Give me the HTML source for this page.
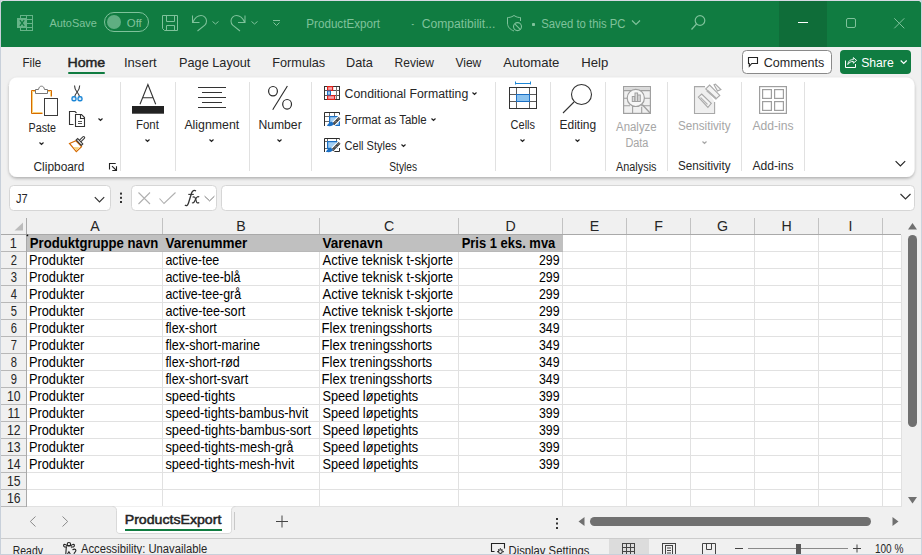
<!DOCTYPE html>
<html><head><meta charset="utf-8"><style>
html,body{margin:0;padding:0;width:922px;height:555px;overflow:hidden;background:#f0f0f0;}
svg{display:block;font-family:"Liberation Sans", sans-serif;}
</style></head><body>
<svg width="922" height="555" viewBox="0 0 922 555">
<defs><filter id="sh" x="-5%" y="-10%" width="110%" height="130%"><feDropShadow dx="0" dy="1.5" stdDeviation="1.6" flood-color="#000" flood-opacity="0.28"/></filter></defs>
<rect x="0" y="0" width="922" height="555" fill="#f0f0f0" />
<rect x="1" y="1" width="920" height="20" fill="#107c41" rx="2.5"/>
<rect x="1" y="10" width="920" height="37" fill="#107c41" />
<rect x="779" y="1" width="48" height="46" fill="#0f6d39" />
<g fill="none" stroke="#66b488" stroke-width="1">
<rect x="20.5" y="15.5" width="12" height="15"/>
<line x1="26.5" y1="15" x2="26.5" y2="31"/>
<line x1="20" y1="19.5" x2="33" y2="19.5"/>
<line x1="20" y1="23.5" x2="33" y2="23.5"/>
<line x1="20" y1="27.5" x2="33" y2="27.5"/>
</g>
<rect x="17" y="18" width="10" height="10" fill="#66b488" />
<path d="M19.9 20.2 L24.2 25.8 M24.2 20.2 L19.9 25.8" stroke="#107c41" fill="none" stroke-width="1.3" />
<text x="49.40" y="27" font-size="11.5" fill="#7fc29b" font-weight="normal" textLength="47.48" lengthAdjust="spacingAndGlyphs" >AutoSave</text>
<rect x="104.5" y="12.5" width="44" height="19" rx="9.5" fill="none" stroke="#7fc29b"/>
<circle cx="114" cy="22" r="7" fill="#5fae82"/>
<text x="126.80" y="27" font-size="11.5" fill="#7fc29b" font-weight="normal" textLength="15.00" lengthAdjust="spacingAndGlyphs" >Off</text>
<path d="M162.5 15.5 H177.5 V30.5 H164.5 L162.5 28.5 Z" stroke="#7fc29b" fill="none" stroke-width="1" />
<path d="M166.5 15.5 V21.5 H174.5 V15.5" stroke="#7fc29b" fill="none" stroke-width="1" />
<path d="M166.5 30.5 V25.5 H174.5 V30.5" stroke="#7fc29b" fill="none" stroke-width="1" />
<path d="M192.5 15.5 V22.5 H199.5 M193 22 C195 17.5 198 15.5 201 15.5 C204 15.5 206.5 18 206.5 21 C206.5 23 205.8 24.2 204.8 25.2 L197.5 31" stroke="#7fc29b" fill="none" stroke-width="1.05" />
<path d="M212.5 21.5 L215.5 24 L218.5 21.5" stroke="#7fc29b" fill="none" stroke-width="1" />
<path d="M 245.00 15.5 V 22.5 H 238.00 M 244.50 22.0 C 242.50 17.5 239.50 15.5 236.50 15.5 C 233.50 15.5 231.00 18.0 231.00 21.0 C 231.00 23.0 231.70 24.2 232.70 25.2 L 240.00 31.0" stroke="#7fc29b" fill="none" stroke-width="1.05" />
<path d="M251.5 21.5 L254.5 24 L257.5 21.5" stroke="#7fc29b" fill="none" stroke-width="1" />
<line x1="273" y1="20.5" x2="280" y2="20.5" stroke="#7fc29b" stroke-width="1" />
<path d="M273.5 22.5 L276.5 25.5 L279.5 22.5" stroke="#7fc29b" fill="none" stroke-width="1" />
<text x="306.30" y="27.8" font-size="12" fill="#7fc29b" font-weight="normal" textLength="73.75" lengthAdjust="spacingAndGlyphs" >ProductExport</text>
<text x="411.50" y="27.8" font-size="12" fill="#7fc29b" font-weight="normal" textLength="2.50" lengthAdjust="spacingAndGlyphs" >-</text>
<text x="421.70" y="27.8" font-size="12" fill="#7fc29b" font-weight="normal" textLength="73.64" lengthAdjust="spacingAndGlyphs" >Compatibilit...</text>
<path d="M514 15.5 C511 17.5 509 17.5 507.5 17.5 V23 C507.5 27 510 29.5 514 31 " stroke="#7fc29b" fill="none" stroke-width="1" />
<path d="M514 15.5 C517 17.5 519 17.5 520.5 17.5 V21" stroke="#7fc29b" fill="none" stroke-width="1" />
<circle cx="517.5" cy="26.6" r="4" fill="none" stroke="#7fc29b" stroke-width="1.1"/>
<line x1="514.8" y1="23.9" x2="520.2" y2="29.3" stroke="#7fc29b" stroke-width="1.1" />
<rect x="532" y="23" width="3" height="3" rx="0.8" fill="#7fc29b"/>
<text x="541.20" y="27.8" font-size="12" fill="#7fc29b" font-weight="normal" textLength="84.29" lengthAdjust="spacingAndGlyphs" >Saved to this PC</text>
<path d="M632.0 20.5 L636 24.5 L640.0 20.5" stroke="#7fc29b" fill="none" stroke-width="1.2" />
<circle cx="700" cy="20.5" r="4.8" fill="none" stroke="#7fc29b" stroke-width="1.2"/>
<line x1="696.5" y1="24" x2="691.5" y2="29.5" stroke="#7fc29b" stroke-width="1.2" />
<rect x="798" y="22" width="10" height="1" fill="#ffffff" />
<rect x="846.5" y="18.5" width="9" height="9" rx="1.5" fill="none" stroke="#7fc29b"/>
<path d="M894.3 18.3 L904.3 28.3 M904.3 18.3 L894.3 28.3" stroke="#7fc29b" fill="none" stroke-width="1" />
<text x="22.51" y="67" font-size="13" fill="#262626" font-weight="normal" textLength="18.70" lengthAdjust="spacingAndGlyphs" >File</text>
<text x="67.41" y="67" font-size="13" fill="#242424" font-weight="normal" textLength="37.84" lengthAdjust="spacingAndGlyphs" stroke="#242424" stroke-width="0.45">Home</text>
<text x="124.00" y="67" font-size="13" fill="#262626" font-weight="normal" textLength="32.61" lengthAdjust="spacingAndGlyphs" >Insert</text>
<text x="179.02" y="67" font-size="13" fill="#262626" font-weight="normal" textLength="71.40" lengthAdjust="spacingAndGlyphs" >Page Layout</text>
<text x="272.32" y="67" font-size="13" fill="#262626" font-weight="normal" textLength="52.89" lengthAdjust="spacingAndGlyphs" >Formulas</text>
<text x="346.02" y="67" font-size="13" fill="#262626" font-weight="normal" textLength="26.82" lengthAdjust="spacingAndGlyphs" >Data</text>
<text x="394.58" y="67" font-size="13" fill="#262626" font-weight="normal" textLength="39.36" lengthAdjust="spacingAndGlyphs" >Review</text>
<text x="455.40" y="67" font-size="13" fill="#262626" font-weight="normal" textLength="25.93" lengthAdjust="spacingAndGlyphs" >View</text>
<text x="503.30" y="67" font-size="13" fill="#262626" font-weight="normal" textLength="56.13" lengthAdjust="spacingAndGlyphs" >Automate</text>
<text x="581.19" y="67" font-size="13" fill="#262626" font-weight="normal" textLength="27.04" lengthAdjust="spacingAndGlyphs" >Help</text>
<rect x="68" y="72" width="37" height="2" fill="#107c41" rx="1"/>
<rect x="742.5" y="50.5" width="89" height="23" rx="4" fill="#fff" stroke="#8a8a8a"/>
<path d="M748.5 57.5 H757.5 V63.5 H751.8 L749.3 66.3 V63.5 H748.5 Z" stroke="#222" fill="none" stroke-width="1.1" />
<text x="763.70" y="67" font-size="13" fill="#262626" font-weight="normal" textLength="60.62" lengthAdjust="spacingAndGlyphs" >Comments</text>
<rect x="840" y="50" width="71" height="24" rx="4" fill="#107c41"/>
<path d="M845.5 60.5 V67.5 H855.5 V64" stroke="#fff" fill="none" stroke-width="1" />
<path d="M847.8 64.5 C848.3 60.8 850.3 59.6 853.3 59.6 V57.6 L856.6 60.4 L853.3 63.2 V61.4 C850.8 61.4 849.3 62.4 847.8 64.5 Z" stroke="#fff" fill="none" stroke-width="0.95" />
<text x="861.20" y="67" font-size="13" fill="#fff" font-weight="normal" textLength="32.52" lengthAdjust="spacingAndGlyphs" >Share</text>
<path d="M900.7 60.5 L903.7 63.5 L906.7 60.5" stroke="#fff" fill="none" stroke-width="1.2" />
<rect x="9" y="77.5" width="905.5" height="99.5" rx="8" fill="#fff" filter="url(#sh)"/>
<rect x="120" y="82" width="1" height="89" fill="#e1e1e1" />
<rect x="175" y="82" width="1" height="89" fill="#e1e1e1" />
<rect x="249" y="82" width="1" height="89" fill="#e1e1e1" />
<rect x="311" y="82" width="1" height="89" fill="#e1e1e1" />
<rect x="495" y="82" width="1" height="89" fill="#e1e1e1" />
<rect x="550" y="82" width="1" height="89" fill="#e1e1e1" />
<rect x="605" y="82" width="1" height="89" fill="#e1e1e1" />
<rect x="667" y="82" width="1" height="89" fill="#e1e1e1" />
<rect x="741" y="82" width="1" height="89" fill="#e1e1e1" />
<rect x="804" y="82" width="1" height="89" fill="#e1e1e1" />
<path d="M42.5 113.5 H31.5 V90.5 H35.5" stroke="#d66b00" fill="none" stroke-width="1" />
<path d="M47.5 90.5 H51.5 V96.5" stroke="#d66b00" fill="none" stroke-width="1" />
<path d="M42.5 112.5 H32.5 V91.5 H35.5 M47.5 91.5 H50.5 V96.5" stroke="#f9d27a" fill="none" stroke-width="1" />
<path d="M35.5 93.5 V89.5 H38.5 C39 87 40 86.2 41.5 86.2 C43 86.2 44 87 44.5 89.5 H47.5 V93.5 Z" stroke="#777" fill="#fff" stroke-width="1" />
<rect x="44.5" y="98.5" width="13" height="17" fill="#fff" stroke="#3b3b3b"/>
<text x="28.60" y="131.8" font-size="12" fill="#262626" font-weight="normal" textLength="27.31" lengthAdjust="spacingAndGlyphs" >Paste</text>
<path d="M39.5 142.5 L41.5 144.5 L43.5 142.5" stroke="#222" fill="none" stroke-width="1.15" />
<path d="M74.5 85.5 C74.5 88 75.5 90 77 92 C78.5 94 79.5 95 79.5 97 M79.7 85.5 C79.7 88 78.7 90 77.2 92 C75.7 94 74.7 95 74.7 97" stroke="#3a3a3a" fill="none" stroke-width="1.1" />
<rect x="72" y="96.8" width="4" height="4" rx="1.6" fill="#dcecf9" stroke="#1b86d6" stroke-width="1.4"/>
<rect x="78" y="96.8" width="4" height="4" rx="1.6" fill="#dcecf9" stroke="#1b86d6" stroke-width="1.4"/>
<path d="M73.5 124.5 H69.5 V111.5 H75 L76.5 113" stroke="#333" fill="none" stroke-width="1.1" />
<path d="M75.5 114.5 H81.5 L84.5 117.5 V126.5 H75.5 Z" stroke="#333" fill="#fff" stroke-width="1.1" />
<path d="M80.5 114.5 V118.5 H84.5" stroke="#333" fill="none" stroke-width="1.1" />
<path d="M78 121.5 H82 M78 123.5 H82" stroke="#555" fill="none" stroke-width="1" />
<path d="M98.5 118.5 L100.5 120.5 L102.5 118.5" stroke="#222" fill="none" stroke-width="1.15" />
<path d="M69.5 143.5 L76 140.8 L81.5 146.7 L76.3 151.7 Z" stroke="#d66b00" fill="#fff" stroke-width="1.2" />
<path d="M73.5 147 L79.5 147.2 L76.5 150.5 Z" stroke="none" fill="#f8d47a" stroke-width="1" />
<line x1="79.8" y1="141.3" x2="83.6" y2="137.6" stroke="#3a3a3a" stroke-width="3.2" stroke-linecap="round"/>
<line x1="79.8" y1="141.3" x2="83.6" y2="137.6" stroke="#fff" stroke-width="1.1" stroke-linecap="round"/>
<path d="M76.2 140 L77.7 138.6 L82.8 143.9 L81.3 145.4 Z" stroke="#3a3a3a" fill="#fff" stroke-width="1.1" />
<text x="33.50" y="170.7" font-size="12" fill="#262626" font-weight="normal" textLength="50.97" lengthAdjust="spacingAndGlyphs" >Clipboard</text>
<path d="M109.5 169.5 V163.5 H115.7" stroke="#222" fill="none" stroke-width="1.1" />
<path d="M112 166.2 L116 170" stroke="#222" fill="none" stroke-width="1.1" />
<path d="M116.5 166.3 V170.5 H112.3" stroke="#222" fill="none" stroke-width="1.1" />
<path d="M140 104.3 L147.9 84.5 L155.7 104.3 M143 97.7 H152.6" stroke="#333" fill="none" stroke-width="1.1" />
<rect x="132" y="106" width="32" height="7.7" fill="#222" />
<text x="136.00" y="129" font-size="12" fill="#262626" font-weight="normal" textLength="22.87" lengthAdjust="spacingAndGlyphs" >Font</text>
<path d="M145.5 139.5 L147.5 141.5 L149.5 139.5" stroke="#222" fill="none" stroke-width="1.15" />
<rect x="198" y="87" width="28" height="1" fill="#333" />
<rect x="202" y="92" width="20" height="1" fill="#333" />
<rect x="198" y="97" width="28" height="1" fill="#333" />
<rect x="202" y="102" width="20" height="1" fill="#333" />
<rect x="198" y="107" width="28" height="1" fill="#333" />
<text x="184.40" y="129" font-size="12" fill="#262626" font-weight="normal" textLength="54.91" lengthAdjust="spacingAndGlyphs" >Alignment</text>
<path d="M209.5 139.5 L211.5 141.5 L213.5 139.5" stroke="#222" fill="none" stroke-width="1.15" />
<ellipse cx="273" cy="91.2" rx="4.4" ry="4.7" fill="none" stroke="#2a2a2a" stroke-width="1.2"/>
<ellipse cx="287.1" cy="104.3" rx="4.4" ry="4.8" fill="none" stroke="#2a2a2a" stroke-width="1.2"/>
<line x1="287.4" y1="86" x2="272.7" y2="109.7" stroke="#2a2a2a" stroke-width="1.1" />
<text x="258.40" y="129" font-size="12" fill="#262626" font-weight="normal" textLength="43.30" lengthAdjust="spacingAndGlyphs" >Number</text>
<path d="M277.5 139.5 L279.5 141.5 L281.5 139.5" stroke="#222" fill="none" stroke-width="1.15" />
<g>
<rect x="324.5" y="86.5" width="15" height="13" fill="#fff" stroke="#333"/>
<rect x="325" y="90" width="14" height="1" fill="#555" />
<rect x="325" y="95" width="14" height="1" fill="#555" />
<rect x="336" y="87" width="1" height="12" fill="#777" />
<rect x="330" y="87" width="1" height="12" fill="#999" />
<rect x="327.6" y="86.6" width="5" height="3.8" fill="#f4a6ae" stroke="#e0221a" stroke-width="1.2"/>
<rect x="327.6" y="95.6" width="7" height="3.8" fill="#f4a6ae" stroke="#e0221a" stroke-width="1.2"/>
<rect x="327.5" y="91" width="3" height="4" fill="#9dcdf1" stroke="#1b6fc4"/>
</g>
<text x="344.60" y="98.1" font-size="12" fill="#262626" font-weight="normal" textLength="123.69" lengthAdjust="spacingAndGlyphs" >Conditional Formatting</text>
<path d="M472.5 92.5 L474.5 94.5 L476.5 92.5" stroke="#222" fill="none" stroke-width="1.15" />
<path d="M324.5 126 V112.5 H339.5 V116" stroke="#2b2b2b" fill="none" stroke-width="1" />
<path d="M325 116.5 H329 M325 121.5 H329 M329.5 113 V116 M334.5 113 V116" stroke="#6b6b6b" fill="none" stroke-width="1" />
<rect x="329.6" y="116.6" width="9.8" height="8.8" fill="#a3cff3" stroke="#1b6fc4" stroke-width="1.2"/>
<line x1="342" y1="115.5" x2="330.5" y2="127" stroke="#fff" stroke-width="4.6" />
<line x1="339.6" y1="117.9" x2="333.2" y2="124.3" stroke="#333" stroke-width="2.6" />
<line x1="339.6" y1="117.9" x2="333.2" y2="124.3" stroke="#fff" stroke-width="0.9" stroke-dasharray="1 1.2"/>
<path d="M326.8 125.8 C328 124.5 329.5 121.5 332 121.8 L333.7 123.6 C333.5 126 330 126.8 326.8 125.8 Z" stroke="none" fill="#1b6fc4" stroke-width="1" />
<text x="344.60" y="124" font-size="12" fill="#262626" font-weight="normal" textLength="82.09" lengthAdjust="spacingAndGlyphs" >Format as Table</text>
<path d="M431.5 118.5 L433.5 120.5 L435.5 118.5" stroke="#222" fill="none" stroke-width="1.15" />
<path d="M324.5 152 V138.5 H339.5 V142 M339.5 148 V151.5 H333" stroke="#2b2b2b" fill="none" stroke-width="1" />
<path d="M325 141.5 H327 M325 148.5 H327 M327.5 139 V141 M336.5 139 V141" stroke="#6b6b6b" fill="none" stroke-width="1" />
<rect x="327.6" y="141.6" width="9.4" height="6.8" fill="#a3cff3" stroke="#1b6fc4" stroke-width="1.2"/>
<line x1="342" y1="140.5" x2="329.5" y2="153" stroke="#fff" stroke-width="4.6" />
<line x1="339.6" y1="142.9" x2="332.2" y2="150.3" stroke="#333" stroke-width="2.6" />
<line x1="339.6" y1="142.9" x2="332.2" y2="150.3" stroke="#fff" stroke-width="0.9" stroke-dasharray="1 1.2"/>
<path d="M325.8 151.8 C327 150.5 328.5 147.5 331 147.8 L332.7 149.6 C332.5 152 329 152.8 325.8 151.8 Z" stroke="none" fill="#1b6fc4" stroke-width="1" />
<text x="344.60" y="149.8" font-size="12" fill="#262626" font-weight="normal" textLength="51.90" lengthAdjust="spacingAndGlyphs" >Cell Styles</text>
<path d="M401.5 144.5 L403.5 146.5 L405.5 144.5" stroke="#222" fill="none" stroke-width="1.15" />
<text x="389.30" y="170.8" font-size="12" fill="#262626" font-weight="normal" textLength="27.70" lengthAdjust="spacingAndGlyphs" >Styles</text>
<rect x="515" y="83" width="16" height="1" fill="#1b86d6" />
<rect x="515" y="81.5" width="1" height="3" fill="#1b86d6" />
<rect x="530" y="81.5" width="1" height="3" fill="#1b86d6" />
<rect x="509.5" y="87.5" width="27" height="21" fill="#fff" stroke="#333"/>
<rect x="510" y="94" width="26" height="1" fill="#5c5c5c" />
<rect x="510" y="101" width="26" height="1" fill="#5c5c5c" />
<rect x="516" y="88" width="1" height="20" fill="#5c5c5c" />
<rect x="529" y="88" width="1" height="20" fill="#5c5c5c" />
<rect x="516.5" y="94.5" width="13" height="7" fill="#8cc3ef" stroke="#1b6fc4"/>
<text x="510.60" y="129" font-size="12" fill="#262626" font-weight="normal" textLength="24.40" lengthAdjust="spacingAndGlyphs" >Cells</text>
<path d="M520.5 139.5 L522.5 141.5 L524.5 139.5" stroke="#222" fill="none" stroke-width="1.15" />
<circle cx="581.5" cy="94.5" r="10" fill="none" stroke="#333" stroke-width="1.1"/>
<line x1="574" y1="102" x2="563" y2="113" stroke="#333" stroke-width="1.1" />
<text x="559.60" y="129" font-size="12" fill="#262626" font-weight="normal" textLength="36.57" lengthAdjust="spacingAndGlyphs" >Editing</text>
<path d="M575.5 139.5 L577.5 141.5 L579.5 139.5" stroke="#222" fill="none" stroke-width="1.15" />
<rect x="623.6" y="86.6" width="26.8" height="26.8" fill="#f0f0f0" stroke="#a0a0a0" stroke-width="1.2"/>
<rect x="624.2" y="87.2" width="25.6" height="3.2" fill="#dadada" />
<path d="M624 90.6 H650 M624 98.2 H628 M644 98.2 H650 M624 105.7 H630 M641 105.7 H650 M632.6 106 V113 M641.7 107 V113" stroke="#a0a0a0" fill="none" stroke-width="1.1" />
<circle cx="635.8" cy="97.9" r="8.6" fill="#f7f7f7" stroke="#a0a0a0" stroke-width="1.2"/>
<line x1="642.2" y1="104.5" x2="650.3" y2="113.3" stroke="#a0a0a0" stroke-width="1.3" />
<g fill="#dcdcdc" stroke="#a0a0a0" stroke-width="1">
<rect x="632.3" y="96.5" width="2.6" height="5"/><rect x="635" y="93" width="2.6" height="8.5"/><rect x="637.7" y="95" width="2.6" height="6.5"/>
</g>
<text x="616.00" y="131" font-size="12" fill="#a6a6a6" font-weight="normal" textLength="40.69" lengthAdjust="spacingAndGlyphs" >Analyze</text>
<text x="625.40" y="147" font-size="12" fill="#a6a6a6" font-weight="normal" textLength="23.00" lengthAdjust="spacingAndGlyphs" >Data</text>
<text x="616.00" y="170.7" font-size="12" fill="#262626" font-weight="normal" textLength="40.50" lengthAdjust="spacingAndGlyphs" >Analysis</text>
<path d="M705 86.6 H694.5 V113.5 H714.6 V102" stroke="#a8a8a8" fill="#efefef" stroke-width="1.1" />
<polygon points="698.3,97.1 701.7,94 711.3,103.3 707.9,107.4" fill="#f4f4f4" stroke="#a8a8a8" stroke-width="1.1"/>
<line x1="700.5" y1="97.5" x2="707.5" y2="104.5" stroke="#b5b5b5" stroke-width="1.2" />
<polygon points="705.8,88.9 709.6,85.1 719.8,95.4 716.1,98.8" fill="#f4f4f4" stroke="#a8a8a8" stroke-width="1.1"/>
<line x1="707" y1="90.5" x2="716.5" y2="99" stroke="#b0b0b0" stroke-width="2" />
<polygon points="714,84.8 715.4,84.1 720.9,89.6 717.5,91" fill="#f4f4f4" stroke="#a8a8a8" stroke-width="1.1"/>
<text x="678.00" y="130.4" font-size="12" fill="#a6a6a6" font-weight="normal" textLength="52.50" lengthAdjust="spacingAndGlyphs" >Sensitivity</text>
<path d="M702.5 141.5 L704.5 143.5 L706.5 141.5" stroke="#a6a6a6" fill="none" stroke-width="1.15" />
<text x="678.00" y="170.4" font-size="12" fill="#262626" font-weight="normal" textLength="52.50" lengthAdjust="spacingAndGlyphs" >Sensitivity</text>
<rect x="759.6" y="86.6" width="26.8" height="26.8" fill="#fff" stroke="#9e9e9e" stroke-width="1.2"/>
<rect x="762.6" y="89.6" width="8.8" height="8.8" fill="none" stroke="#9e9e9e" stroke-width="1.2"/>
<rect x="774.6" y="89.6" width="8.8" height="8.8" fill="none" stroke="#9e9e9e" stroke-width="1.2"/>
<rect x="762.6" y="101.6" width="8.8" height="8.8" fill="none" stroke="#9e9e9e" stroke-width="1.2"/>
<rect x="774.6" y="101.6" width="8.8" height="8.8" fill="none" stroke="#9e9e9e" stroke-width="1.2"/>
<text x="752.40" y="130.4" font-size="12" fill="#a6a6a6" font-weight="normal" textLength="41.20" lengthAdjust="spacingAndGlyphs" >Add-ins</text>
<text x="752.40" y="170.4" font-size="12" fill="#262626" font-weight="normal" textLength="41.20" lengthAdjust="spacingAndGlyphs" >Add-ins</text>
<path d="M895.6 161.2 L900.4 165.9 L905.2 161.2" stroke="#222" fill="none" stroke-width="1.15" />
<rect x="9.5" y="185.5" width="101" height="25" rx="4" fill="#fff" stroke="#d6d6d6"/>
<text x="16.00" y="202.8" font-size="13.4" fill="#262626" font-weight="normal" textLength="11.67" lengthAdjust="spacingAndGlyphs" >J7</text>
<path d="M94.8 197.1 L99.5 201.8 L104.2 197.1" stroke="#333" fill="none" stroke-width="1.2" />
<rect x="120" y="192.6" width="2" height="2" fill="#333" />
<rect x="120" y="196.8" width="2" height="2" fill="#333" />
<rect x="120" y="201" width="2" height="2" fill="#333" />
<rect x="131.5" y="185.5" width="85" height="25" rx="4" fill="#fff" stroke="#d6d6d6"/>
<path d="M138.5 192.5 L150 204 M150 192.5 L138.5 204" stroke="#b0b0b0" fill="none" stroke-width="1.1" />
<path d="M159.5 198.5 L164 203.5 L175.5 192.5" stroke="#b0b0b0" fill="none" stroke-width="1.1" />
<path d="M185 204.8 C186 206.3 187.6 205.8 188.4 203.2 L191.6 193 C192.5 190.3 194.3 189.8 196 191" stroke="#333" fill="none" stroke-width="1.3" />
<path d="M188.3 194.4 H193.8" stroke="#333" fill="none" stroke-width="1.1" />
<path d="M192.6 197.2 C194.3 196.3 195.2 197.3 195.6 199 L196.4 201.6 C196.9 203.2 198 203.3 199.2 202.4" stroke="#333" fill="none" stroke-width="1.2" />
<path d="M199.2 197 C198 196.2 197 196.8 196 198.4 L194.6 201.2 C193.8 202.9 192.8 203.3 192 202.6" stroke="#333" fill="none" stroke-width="1.2" />
<path d="M204.6 196.2 L209.6 200.9 L214.4 196.2" stroke="#777" fill="none" stroke-width="1" />
<rect x="221.5" y="185.5" width="693" height="25" rx="4" fill="#fff" stroke="#d6d6d6"/>
<path d="M900.5 194.0 L905.5 199.0 L910.5 194.0" stroke="#333" fill="none" stroke-width="1.2" />
<rect x="1" y="217" width="900" height="18" fill="#f0f0f0" />
<rect x="1" y="235" width="26" height="272" fill="#f0f0f0" />
<rect x="27" y="235" width="874" height="271" fill="#fff" />
<rect x="27" y="251" width="874" height="1" fill="#e1e1e1" />
<rect x="27" y="268" width="874" height="1" fill="#e1e1e1" />
<rect x="27" y="285" width="874" height="1" fill="#e1e1e1" />
<rect x="27" y="302" width="874" height="1" fill="#e1e1e1" />
<rect x="27" y="319" width="874" height="1" fill="#e1e1e1" />
<rect x="27" y="336" width="874" height="1" fill="#e1e1e1" />
<rect x="27" y="353" width="874" height="1" fill="#e1e1e1" />
<rect x="27" y="370" width="874" height="1" fill="#e1e1e1" />
<rect x="27" y="387" width="874" height="1" fill="#e1e1e1" />
<rect x="27" y="404" width="874" height="1" fill="#e1e1e1" />
<rect x="27" y="421" width="874" height="1" fill="#e1e1e1" />
<rect x="27" y="438" width="874" height="1" fill="#e1e1e1" />
<rect x="27" y="455" width="874" height="1" fill="#e1e1e1" />
<rect x="27" y="472" width="874" height="1" fill="#e1e1e1" />
<rect x="27" y="489" width="874" height="1" fill="#e1e1e1" />
<rect x="27" y="506" width="874" height="1" fill="#e1e1e1" />
<rect x="162" y="235" width="1" height="271" fill="#e1e1e1" />
<rect x="319" y="235" width="1" height="271" fill="#e1e1e1" />
<rect x="458" y="235" width="1" height="271" fill="#e1e1e1" />
<rect x="562" y="235" width="1" height="271" fill="#e1e1e1" />
<rect x="626" y="235" width="1" height="271" fill="#e1e1e1" />
<rect x="690" y="235" width="1" height="271" fill="#e1e1e1" />
<rect x="754" y="235" width="1" height="271" fill="#e1e1e1" />
<rect x="818" y="235" width="1" height="271" fill="#e1e1e1" />
<rect x="882" y="235" width="1" height="271" fill="#e1e1e1" />
<rect x="27" y="235" width="536" height="17" fill="#c0c0c0" />
<rect x="27" y="251" width="536" height="1" fill="#b8b8b8" />
<rect x="162" y="218" width="1" height="17" fill="#c2c2c2" />
<rect x="319" y="218" width="1" height="17" fill="#c2c2c2" />
<rect x="458" y="218" width="1" height="17" fill="#c2c2c2" />
<rect x="562" y="218" width="1" height="17" fill="#c2c2c2" />
<rect x="626" y="218" width="1" height="17" fill="#c2c2c2" />
<rect x="690" y="218" width="1" height="17" fill="#c2c2c2" />
<rect x="754" y="218" width="1" height="17" fill="#c2c2c2" />
<rect x="818" y="218" width="1" height="17" fill="#c2c2c2" />
<rect x="882" y="218" width="1" height="17" fill="#c2c2c2" />
<rect x="26" y="218" width="1" height="289" fill="#a9a9a9" />
<rect x="1" y="234" width="900" height="1" fill="#a9a9a9" />
<rect x="1" y="251" width="25" height="1" fill="#b8b8b8" />
<rect x="1" y="268" width="25" height="1" fill="#b8b8b8" />
<rect x="1" y="285" width="25" height="1" fill="#b8b8b8" />
<rect x="1" y="302" width="25" height="1" fill="#b8b8b8" />
<rect x="1" y="319" width="25" height="1" fill="#b8b8b8" />
<rect x="1" y="336" width="25" height="1" fill="#b8b8b8" />
<rect x="1" y="353" width="25" height="1" fill="#b8b8b8" />
<rect x="1" y="370" width="25" height="1" fill="#b8b8b8" />
<rect x="1" y="387" width="25" height="1" fill="#b8b8b8" />
<rect x="1" y="404" width="25" height="1" fill="#b8b8b8" />
<rect x="1" y="421" width="25" height="1" fill="#b8b8b8" />
<rect x="1" y="438" width="25" height="1" fill="#b8b8b8" />
<rect x="1" y="455" width="25" height="1" fill="#b8b8b8" />
<rect x="1" y="472" width="25" height="1" fill="#b8b8b8" />
<rect x="1" y="489" width="25" height="1" fill="#b8b8b8" />
<rect x="1" y="506" width="25" height="1" fill="#b8b8b8" />
<rect x="901" y="235" width="1" height="272" fill="#e1e1e1" />
<rect x="26.6" y="234.6" width="1.6" height="1.6" fill="#111" />
<path d="M14.5 230.5 L23 222.5 V230.5 Z" stroke="none" fill="#bcbcbc" stroke-width="1" />
<text x="95.0" y="231" font-size="14.2" fill="#262626" font-weight="normal" text-anchor="middle" >A</text>
<text x="241.0" y="231" font-size="14.2" fill="#262626" font-weight="normal" text-anchor="middle" >B</text>
<text x="389.0" y="231" font-size="14.2" fill="#262626" font-weight="normal" text-anchor="middle" >C</text>
<text x="510.5" y="231" font-size="14.2" fill="#262626" font-weight="normal" text-anchor="middle" >D</text>
<text x="594.5" y="231" font-size="14.2" fill="#262626" font-weight="normal" text-anchor="middle" >E</text>
<text x="658.5" y="231" font-size="14.2" fill="#262626" font-weight="normal" text-anchor="middle" >F</text>
<text x="722.5" y="231" font-size="14.2" fill="#262626" font-weight="normal" text-anchor="middle" >G</text>
<text x="786.5" y="231" font-size="14.2" fill="#262626" font-weight="normal" text-anchor="middle" >H</text>
<text x="850.5" y="231" font-size="14.2" fill="#262626" font-weight="normal" text-anchor="middle" >I</text>
<text x="9.85" y="247.5" font-size="14.2" fill="#262626" font-weight="normal" textLength="7.10" lengthAdjust="spacingAndGlyphs" >1</text>
<text x="10.75" y="264.5" font-size="14.2" fill="#262626" font-weight="normal" textLength="6.21" lengthAdjust="spacingAndGlyphs" >2</text>
<text x="10.75" y="281.5" font-size="14.2" fill="#262626" font-weight="normal" textLength="6.21" lengthAdjust="spacingAndGlyphs" >3</text>
<text x="10.75" y="298.5" font-size="14.2" fill="#262626" font-weight="normal" textLength="6.21" lengthAdjust="spacingAndGlyphs" >4</text>
<text x="10.75" y="315.5" font-size="14.2" fill="#262626" font-weight="normal" textLength="6.21" lengthAdjust="spacingAndGlyphs" >5</text>
<text x="10.75" y="332.5" font-size="14.2" fill="#262626" font-weight="normal" textLength="6.21" lengthAdjust="spacingAndGlyphs" >6</text>
<text x="10.75" y="349.5" font-size="14.2" fill="#262626" font-weight="normal" textLength="6.21" lengthAdjust="spacingAndGlyphs" >7</text>
<text x="10.75" y="366.5" font-size="14.2" fill="#262626" font-weight="normal" textLength="6.21" lengthAdjust="spacingAndGlyphs" >8</text>
<text x="10.75" y="383.5" font-size="14.2" fill="#262626" font-weight="normal" textLength="6.21" lengthAdjust="spacingAndGlyphs" >9</text>
<text x="7.04" y="400.5" font-size="14.2" fill="#262626" font-weight="normal" textLength="13.57" lengthAdjust="spacingAndGlyphs" >10</text>
<text x="7.47" y="417.5" font-size="14.2" fill="#262626" font-weight="normal" textLength="12.71" lengthAdjust="spacingAndGlyphs" >11</text>
<text x="7.04" y="434.5" font-size="14.2" fill="#262626" font-weight="normal" textLength="13.57" lengthAdjust="spacingAndGlyphs" >12</text>
<text x="7.04" y="451.5" font-size="14.2" fill="#262626" font-weight="normal" textLength="13.57" lengthAdjust="spacingAndGlyphs" >13</text>
<text x="7.04" y="468.5" font-size="14.2" fill="#262626" font-weight="normal" textLength="13.57" lengthAdjust="spacingAndGlyphs" >14</text>
<text x="7.04" y="485.5" font-size="14.2" fill="#262626" font-weight="normal" textLength="13.57" lengthAdjust="spacingAndGlyphs" >15</text>
<text x="7.04" y="502.5" font-size="14.2" fill="#262626" font-weight="normal" textLength="13.57" lengthAdjust="spacingAndGlyphs" >16</text>
<text x="29.80" y="247.5" font-size="14.2" fill="#000" font-weight="bold" textLength="128.42" lengthAdjust="spacingAndGlyphs" >Produktgruppe navn</text>
<text x="165.40" y="247.5" font-size="14.2" fill="#000" font-weight="bold" textLength="81.84" lengthAdjust="spacingAndGlyphs" >Varenummer</text>
<text x="322.40" y="247.5" font-size="14.2" fill="#000" font-weight="bold" textLength="60.44" lengthAdjust="spacingAndGlyphs" >Varenavn</text>
<text x="461.70" y="247.5" font-size="14.2" fill="#000" font-weight="bold" textLength="93.60" lengthAdjust="spacingAndGlyphs" >Pris 1 eks. mva</text>
<text x="28.90" y="264.5" font-size="14.2" fill="#000" font-weight="normal" textLength="55.45" lengthAdjust="spacingAndGlyphs" >Produkter</text>
<text x="165.40" y="264.5" font-size="14.2" fill="#000" font-weight="normal" textLength="53.90" lengthAdjust="spacingAndGlyphs" >active-tee</text>
<text x="322.40" y="264.5" font-size="14.2" fill="#000" font-weight="normal" textLength="130.80" lengthAdjust="spacingAndGlyphs" >Active teknisk t-skjorte</text>
<text x="539.00" y="264.5" font-size="14.2" fill="#000" font-weight="normal" textLength="20.60" lengthAdjust="spacingAndGlyphs" >299</text>
<text x="28.90" y="281.5" font-size="14.2" fill="#000" font-weight="normal" textLength="55.45" lengthAdjust="spacingAndGlyphs" >Produkter</text>
<text x="165.40" y="281.5" font-size="14.2" fill="#000" font-weight="normal" textLength="75.10" lengthAdjust="spacingAndGlyphs" >active-tee-blå</text>
<text x="322.40" y="281.5" font-size="14.2" fill="#000" font-weight="normal" textLength="130.80" lengthAdjust="spacingAndGlyphs" >Active teknisk t-skjorte</text>
<text x="539.00" y="281.5" font-size="14.2" fill="#000" font-weight="normal" textLength="20.60" lengthAdjust="spacingAndGlyphs" >299</text>
<text x="28.90" y="298.5" font-size="14.2" fill="#000" font-weight="normal" textLength="55.45" lengthAdjust="spacingAndGlyphs" >Produkter</text>
<text x="165.40" y="298.5" font-size="14.2" fill="#000" font-weight="normal" textLength="75.70" lengthAdjust="spacingAndGlyphs" >active-tee-grå</text>
<text x="322.40" y="298.5" font-size="14.2" fill="#000" font-weight="normal" textLength="130.80" lengthAdjust="spacingAndGlyphs" >Active teknisk t-skjorte</text>
<text x="539.00" y="298.5" font-size="14.2" fill="#000" font-weight="normal" textLength="20.60" lengthAdjust="spacingAndGlyphs" >299</text>
<text x="28.90" y="315.5" font-size="14.2" fill="#000" font-weight="normal" textLength="55.45" lengthAdjust="spacingAndGlyphs" >Produkter</text>
<text x="165.40" y="315.5" font-size="14.2" fill="#000" font-weight="normal" textLength="79.95" lengthAdjust="spacingAndGlyphs" >active-tee-sort</text>
<text x="322.40" y="315.5" font-size="14.2" fill="#000" font-weight="normal" textLength="130.80" lengthAdjust="spacingAndGlyphs" >Active teknisk t-skjorte</text>
<text x="539.00" y="315.5" font-size="14.2" fill="#000" font-weight="normal" textLength="20.60" lengthAdjust="spacingAndGlyphs" >299</text>
<text x="28.90" y="332.5" font-size="14.2" fill="#000" font-weight="normal" textLength="55.45" lengthAdjust="spacingAndGlyphs" >Produkter</text>
<text x="165.40" y="332.5" font-size="14.2" fill="#000" font-weight="normal" textLength="51.45" lengthAdjust="spacingAndGlyphs" >flex-short</text>
<text x="321.48" y="332.5" font-size="14.2" fill="#000" font-weight="normal" textLength="110.71" lengthAdjust="spacingAndGlyphs" >Flex treningsshorts</text>
<text x="539.00" y="332.5" font-size="14.2" fill="#000" font-weight="normal" textLength="20.60" lengthAdjust="spacingAndGlyphs" >349</text>
<text x="28.90" y="349.5" font-size="14.2" fill="#000" font-weight="normal" textLength="55.45" lengthAdjust="spacingAndGlyphs" >Produkter</text>
<text x="165.40" y="349.5" font-size="14.2" fill="#000" font-weight="normal" textLength="94.60" lengthAdjust="spacingAndGlyphs" >flex-short-marine</text>
<text x="321.48" y="349.5" font-size="14.2" fill="#000" font-weight="normal" textLength="110.71" lengthAdjust="spacingAndGlyphs" >Flex treningsshorts</text>
<text x="539.00" y="349.5" font-size="14.2" fill="#000" font-weight="normal" textLength="20.60" lengthAdjust="spacingAndGlyphs" >349</text>
<text x="28.90" y="366.5" font-size="14.2" fill="#000" font-weight="normal" textLength="55.45" lengthAdjust="spacingAndGlyphs" >Produkter</text>
<text x="165.40" y="366.5" font-size="14.2" fill="#000" font-weight="normal" textLength="74.39" lengthAdjust="spacingAndGlyphs" >flex-short-rød</text>
<text x="321.48" y="366.5" font-size="14.2" fill="#000" font-weight="normal" textLength="110.71" lengthAdjust="spacingAndGlyphs" >Flex treningsshorts</text>
<text x="539.00" y="366.5" font-size="14.2" fill="#000" font-weight="normal" textLength="20.60" lengthAdjust="spacingAndGlyphs" >349</text>
<text x="28.90" y="383.5" font-size="14.2" fill="#000" font-weight="normal" textLength="55.45" lengthAdjust="spacingAndGlyphs" >Produkter</text>
<text x="165.40" y="383.5" font-size="14.2" fill="#000" font-weight="normal" textLength="82.75" lengthAdjust="spacingAndGlyphs" >flex-short-svart</text>
<text x="321.48" y="383.5" font-size="14.2" fill="#000" font-weight="normal" textLength="110.71" lengthAdjust="spacingAndGlyphs" >Flex treningsshorts</text>
<text x="539.00" y="383.5" font-size="14.2" fill="#000" font-weight="normal" textLength="20.60" lengthAdjust="spacingAndGlyphs" >349</text>
<text x="28.90" y="400.5" font-size="14.2" fill="#000" font-weight="normal" textLength="55.45" lengthAdjust="spacingAndGlyphs" >Produkter</text>
<text x="165.40" y="400.5" font-size="14.2" fill="#000" font-weight="normal" textLength="69.68" lengthAdjust="spacingAndGlyphs" >speed-tights</text>
<text x="322.40" y="400.5" font-size="14.2" fill="#000" font-weight="normal" textLength="95.78" lengthAdjust="spacingAndGlyphs" >Speed løpetights</text>
<text x="539.00" y="400.5" font-size="14.2" fill="#000" font-weight="normal" textLength="20.60" lengthAdjust="spacingAndGlyphs" >399</text>
<text x="28.90" y="417.5" font-size="14.2" fill="#000" font-weight="normal" textLength="55.45" lengthAdjust="spacingAndGlyphs" >Produkter</text>
<text x="165.40" y="417.5" font-size="14.2" fill="#000" font-weight="normal" textLength="142.95" lengthAdjust="spacingAndGlyphs" >speed-tights-bambus-hvit</text>
<text x="322.40" y="417.5" font-size="14.2" fill="#000" font-weight="normal" textLength="95.78" lengthAdjust="spacingAndGlyphs" >Speed løpetights</text>
<text x="539.00" y="417.5" font-size="14.2" fill="#000" font-weight="normal" textLength="20.60" lengthAdjust="spacingAndGlyphs" >399</text>
<text x="28.90" y="434.5" font-size="14.2" fill="#000" font-weight="normal" textLength="55.45" lengthAdjust="spacingAndGlyphs" >Produkter</text>
<text x="165.40" y="434.5" font-size="14.2" fill="#000" font-weight="normal" textLength="145.75" lengthAdjust="spacingAndGlyphs" >speed-tights-bambus-sort</text>
<text x="322.40" y="434.5" font-size="14.2" fill="#000" font-weight="normal" textLength="95.78" lengthAdjust="spacingAndGlyphs" >Speed løpetights</text>
<text x="539.00" y="434.5" font-size="14.2" fill="#000" font-weight="normal" textLength="20.60" lengthAdjust="spacingAndGlyphs" >399</text>
<text x="28.90" y="451.5" font-size="14.2" fill="#000" font-weight="normal" textLength="55.45" lengthAdjust="spacingAndGlyphs" >Produkter</text>
<text x="165.40" y="451.5" font-size="14.2" fill="#000" font-weight="normal" textLength="128.10" lengthAdjust="spacingAndGlyphs" >speed-tights-mesh-grå</text>
<text x="322.40" y="451.5" font-size="14.2" fill="#000" font-weight="normal" textLength="95.78" lengthAdjust="spacingAndGlyphs" >Speed løpetights</text>
<text x="539.00" y="451.5" font-size="14.2" fill="#000" font-weight="normal" textLength="20.60" lengthAdjust="spacingAndGlyphs" >399</text>
<text x="28.90" y="468.5" font-size="14.2" fill="#000" font-weight="normal" textLength="55.45" lengthAdjust="spacingAndGlyphs" >Produkter</text>
<text x="165.40" y="468.5" font-size="14.2" fill="#000" font-weight="normal" textLength="128.95" lengthAdjust="spacingAndGlyphs" >speed-tights-mesh-hvit</text>
<text x="322.40" y="468.5" font-size="14.2" fill="#000" font-weight="normal" textLength="95.78" lengthAdjust="spacingAndGlyphs" >Speed løpetights</text>
<text x="539.00" y="468.5" font-size="14.2" fill="#000" font-weight="normal" textLength="20.60" lengthAdjust="spacingAndGlyphs" >399</text>
<path d="M908 229.5 L912.5 223 L917 229.5 Z" stroke="none" fill="#707070" stroke-width="1" />
<rect x="908" y="235" width="9" height="192" rx="4.5" fill="#707070"/>
<path d="M908 497 L912.5 503.5 L917 497 Z" stroke="none" fill="#707070" stroke-width="1" />
<rect x="1" y="507" width="920" height="31" fill="#f0f0f0" />
<path d="M35.5 516.5 L30.3 521.5 L35.5 526.5" stroke="#8a8a8a" fill="none" stroke-width="1" />
<path d="M62.5 516.5 L67.7 521.5 L62.5 526.5" stroke="#8a8a8a" fill="none" stroke-width="1" />
<path d="M112.5 506.5 C115 506.5 116.5 508 116.5 510.5 V530.5 C116.5 532.5 118 533.5 120 533.5 H228 C230 533.5 231.5 532.5 231.5 530.5 V510.5 C231.5 508 233 506.5 235.5 506.5" fill="#fff" stroke="#d9d9d9"/>
<text x="124.71" y="524" font-size="13" fill="#242424" font-weight="normal" textLength="96.67" lengthAdjust="spacingAndGlyphs" stroke="#242424" stroke-width="0.5">ProductsExport</text>
<rect x="125" y="529" width="97" height="2" fill="#107c41" />
<rect x="234" y="512" width="1" height="18" fill="#c8c8c8" />
<path d="M282 515.5 V527.5 M276 521.5 H288" stroke="#444" fill="none" stroke-width="1" />
<rect x="556" y="518" width="2" height="2" fill="#333" />
<rect x="556" y="522.5" width="2" height="2" fill="#333" />
<rect x="556" y="527" width="2" height="2" fill="#333" />
<path d="M584.5 517 L578.5 521.5 L584.5 526 Z" stroke="none" fill="#707070" stroke-width="1" />
<rect x="590" y="517" width="281" height="9" rx="4.5" fill="#707070"/>
<path d="M892.5 517 L898.5 521.5 L892.5 526 Z" stroke="none" fill="#707070" stroke-width="1" />
<rect x="1" y="538" width="920" height="1" fill="#cccccc" />
<rect x="1" y="539" width="920" height="15" fill="#f0f0f0" />
<text x="12.80" y="554.6" font-size="12" fill="#262626" font-weight="normal" textLength="30.10" lengthAdjust="spacingAndGlyphs" >Ready</text>
<circle cx="68.9" cy="544.2" r="1.7" fill="none" stroke="#222" stroke-width="1.1"/>
<path d="M66.8 546.6 C65.5 547.5 63.3 547 63.6 545.2 C64 543.8 66 544.5 67 545.6 H71 C72 544.5 74 543.8 74.4 545.2 C74.7 547 72.5 547.5 71.2 546.6" stroke="#222" fill="none" stroke-width="1.1" />
<path d="M66.3 546.8 L65.8 554 M71.5 547.5 L71.3 548" stroke="#222" fill="none" stroke-width="1.1" />
<path d="M67.5 554 L68.9 551.8 L70.3 554" stroke="#222" fill="none" stroke-width="1.1" />
<path d="M72.6 550.2 C73 548.7 75.8 548.7 75.9 550.4 C76 552 74.3 552 74 553.8" stroke="#222" fill="none" stroke-width="1.1" />
<text x="81.00" y="553" font-size="12" fill="#262626" font-weight="normal" textLength="126.19" lengthAdjust="spacingAndGlyphs" >Accessibility: Unavailable</text>
<path d="M494.5 551.5 H491.5 V543.5 H504.5 V548.5" stroke="#222" fill="none" stroke-width="1.1" />
<circle cx="500.4" cy="551.6" r="1.9" fill="none" stroke="#222" stroke-width="1.1"/>
<path d="M500.4 548.2 V549 M500.4 554.2 V555 M497 551.6 H497.8 M503 551.6 H503.8 M498.3 549.3 L498.8 549.8 M502.3 549.3 L501.8 549.8" stroke="#222" fill="none" stroke-width="1.2" />
<text x="508.60" y="554.6" font-size="12" fill="#262626" font-weight="normal" textLength="80.70" lengthAdjust="spacingAndGlyphs" >Display Settings</text>
<rect x="609" y="539" width="40" height="15" fill="#dcdcdc" />
<g stroke="#444" fill="none">
<rect x="622.5" y="543.5" width="12" height="12"/>
<path d="M626.5 543.5 V556 M630.5 543.5 V556 M622.5 547.5 H635 M622.5 551.5 H635"/>
<rect x="662.5" y="543.5" width="13" height="12"/>
<rect x="665.5" y="545.5" width="7" height="10"/>
<path d="M667 548 H671 M667 550.5 H671 M667 553 H671"/>
<path d="M702.5 556 V543.5 H715.5 V556 M706.5 543.5 V549.5 H711.5 V543.5"/>
</g>
<rect x="735" y="548" width="8" height="1" fill="#444" />
<rect x="748" y="548" width="100" height="1" fill="#8a8a8a" />
<rect x="796" y="544" width="5" height="11" fill="#5a5a5a" />
<rect x="853" y="548" width="8" height="1" fill="#444" />
<rect x="856.5" y="544.5" width="1" height="8" fill="#444" />
<text x="874.90" y="553" font-size="12" fill="#262626" font-weight="normal" textLength="28.52" lengthAdjust="spacingAndGlyphs" >100 %</text>
<rect x="0" y="0" width="922" height="1" fill="#d8dae4" />
<rect x="0" y="0" width="1" height="555" fill="#c8d0da" />
<rect x="921" y="0" width="1" height="555" fill="#ccd3dd" />
<rect x="0" y="554" width="922" height="1" fill="#c8d0da" />
</svg></body></html>
